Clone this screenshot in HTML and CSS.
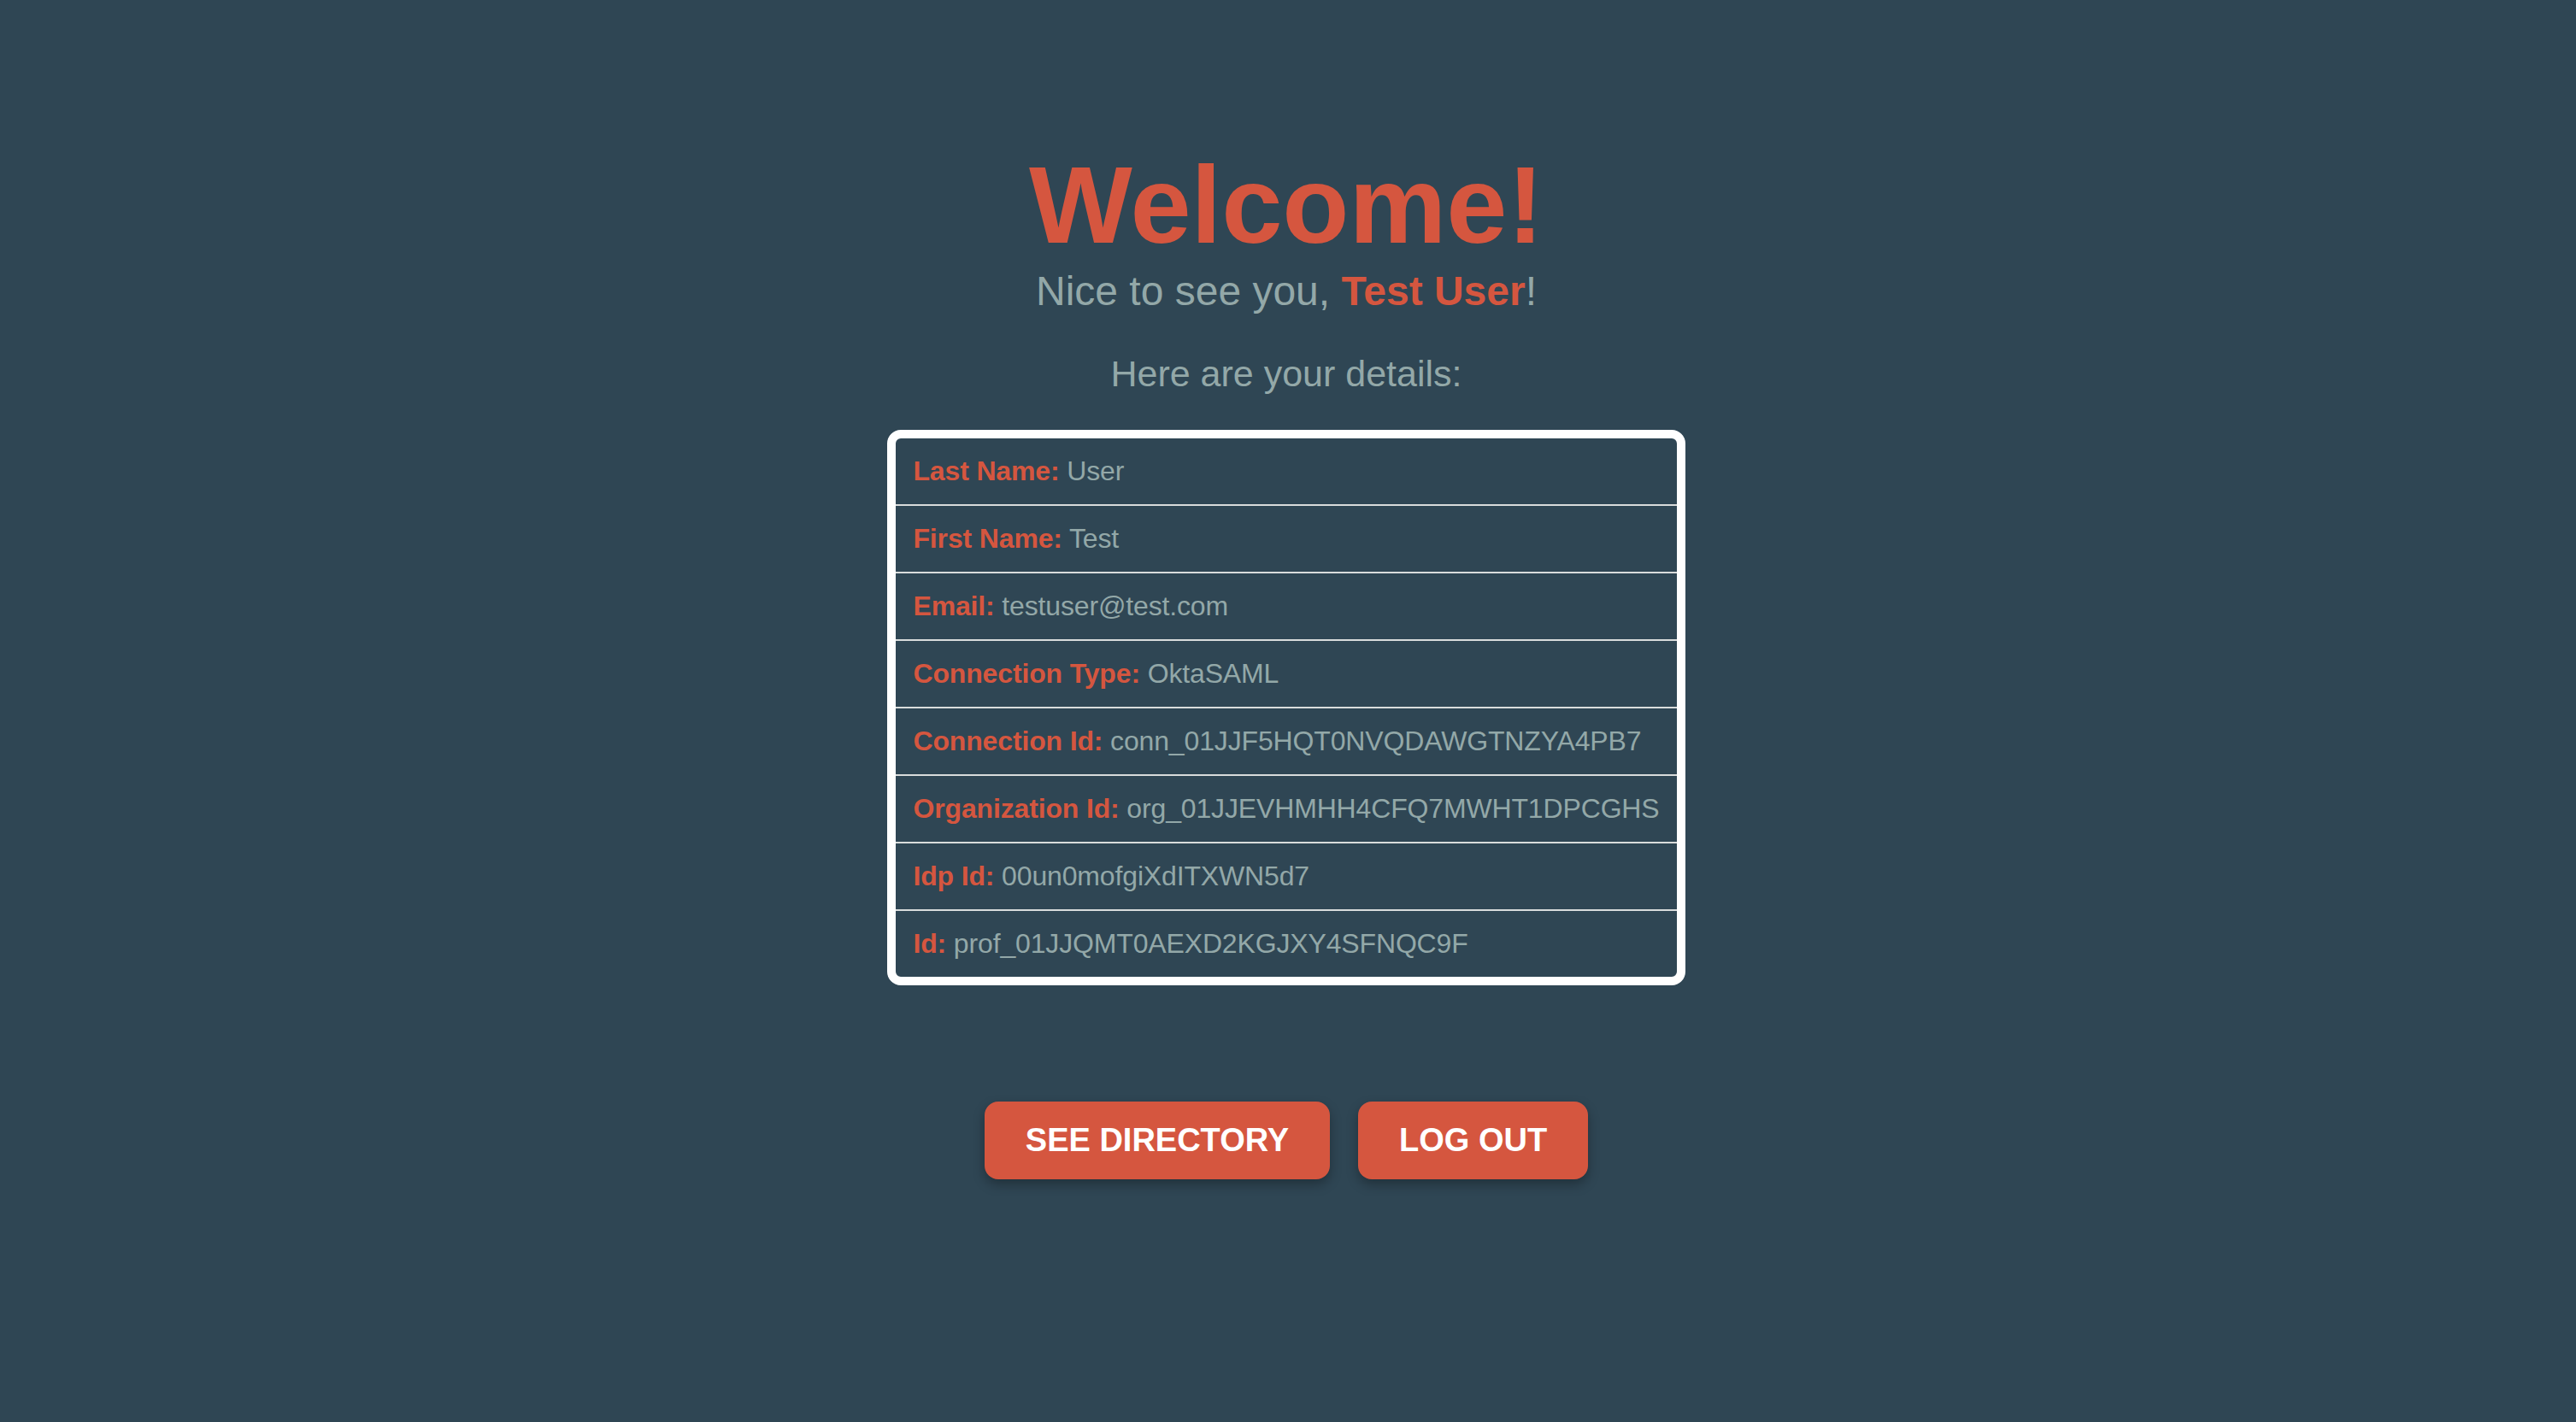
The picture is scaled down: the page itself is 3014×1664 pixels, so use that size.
FILE: index.html
```html
<!DOCTYPE html>
<html lang="en">
<head>
<meta charset="utf-8">
<title>Welcome</title>
<link rel="stylesheet" href="styles.css">
</head>
<body>
<main class="page">
  <h1 class="title">Welcome!</h1>
  <p class="greeting">Nice to see you, <strong class="accent">Test User</strong>!</p>
  <p class="intro">Here are your details:</p>
  <ul class="details">
    <li class="row"><span class="label">Last Name:</span> User</li>
    <li class="row"><span class="label">First Name:</span> Test</li>
    <li class="row"><span class="label">Email:</span> testuser@test.com</li>
    <li class="row"><span class="label">Connection Type:</span> OktaSAML</li>
    <li class="row"><span class="label">Connection Id:</span> conn_01JJF5HQT0NVQDAWGTNZYA4PB7</li>
    <li class="row"><span class="label">Organization Id:</span> org_01JJEVHMHH4CFQ7MWHT1DPCGHS</li>
    <li class="row"><span class="label">Idp Id:</span> 00un0mofgiXdITXWN5d7</li>
    <li class="row"><span class="label">Id:</span> prof_01JJQMT0AEXD2KGJXY4SFNQC9F</li>
  </ul>
  <div class="actions">
    <button class="btn" type="button">SEE DIRECTORY</button>
    <button class="btn" type="button">LOG OUT</button>
  </div>
</main>
</body>
</html>
```

FILE: styles.css
```css
html, body {
  margin: 0;
  padding: 0;
}

body {
  background: #2f4654;
  font-family: "Liberation Sans", Arial, sans-serif;
  color: #93a8a8;
  min-height: 100vh;
}

.page {
  display: flex;
  flex-direction: column;
  align-items: center;
  padding-top: 166px;
  padding-right: 4px;
}

.title {
  margin: 0;
  font-size: 128px;
  font-weight: 700;
  line-height: normal;
  color: #d5563f;
}

.greeting {
  margin: 0;
  font-size: 48px;
  line-height: normal;
}

.accent {
  color: #d5563f;
  font-weight: 700;
}

.intro {
  margin: 45px 0 41px;
  font-size: 43px;
  line-height: normal;
}

.details {
  list-style: none;
  margin: 0;
  padding: 0;
  border: 10px solid #ffffff;
  border-radius: 16px;
  width: fit-content;
  font-size: 32px;
  line-height: normal;
}

.row {
  padding: 20px;
  border-bottom: 2px solid #d9dcdc;
  white-space: nowrap;
  letter-spacing: -0.15px;
}

.row:last-child {
  border-bottom: none;
}

.label {
  color: #d5563f;
  font-weight: 700;
}

.actions {
  display: flex;
  gap: 33px;
  margin-top: 136px;
}

.btn {
  font-family: "Liberation Sans", Arial, sans-serif;
  font-size: 38px;
  font-weight: 700;
  line-height: normal;
  color: #ffffff;
  background: #d5563f;
  border: none;
  border-radius: 16px;
  padding: 24px 48px;
  box-shadow: 0 6px 14px rgba(0, 0, 0, 0.3);
  cursor: pointer;
}
```
